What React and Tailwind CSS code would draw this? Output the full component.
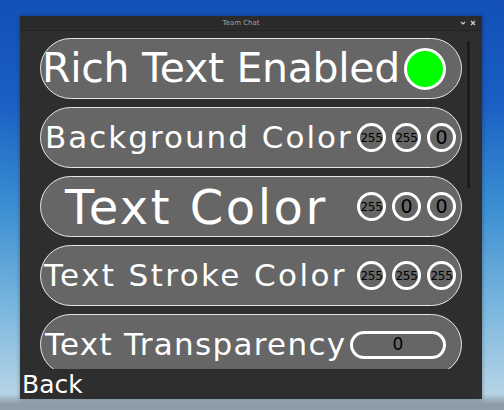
import React from 'react';

const font = { fontFamily: '"DejaVu Sans", "Noto Sans", sans-serif' };

const Dot = ({ value }) => (
  <div className="w-[29px] h-[29px] rounded-full border-[3px] border-white bg-[#666666] flex items-center justify-center text-black leading-none">
    {value === '0' ? (
      <span className="text-[19px]">0</span>
    ) : (
      <span className="text-[12px] tracking-[-0.3px]">{value}</span>
    )}
  </div>
);

const Pill = ({ children, className = '' }) => (
  <div className={`shrink-0 h-[61px] w-[422px] rounded-full border border-[#e6e6e6] bg-[#666666] flex items-center ${className}`}>
    {children}
  </div>
);

const ColorRow = ({ label, values, labelClass }) => (
  <Pill className="pr-[5px]">
    <span className={`flex-1 text-white whitespace-nowrap leading-none ${labelClass}`}>{label}</span>
    <div className="flex gap-[6px]">
      {values.map((v, i) => (
        <Dot key={i} value={v} />
      ))}
    </div>
  </Pill>
);

export default function App() {
  return (
    <div
      className="w-[504px] h-[410px] overflow-hidden pl-[20px] pt-[16px] bg-[linear-gradient(180deg,#1250b6_0%,#1a5fc4_25%,#3a8ed2_50%,#7ab6de_75%,#b6d4e6_96%,#8e9ca8_98.5%,#8e9ca8_100%)]"
      style={font}
    >
      <div className="w-[462px] h-[383px] bg-[#2e2e2e] flex flex-col shadow-[0_0_4px_rgba(0,0,0,0.35)]">
        {/* title bar */}
        <div className="h-[15px] shrink-0 bg-[#2b2b2b] border-b border-[#242424] flex items-center relative">
          <span className="flex-1 text-center pr-[20px] text-[7px] text-[#a0a0a0] leading-none">Team Chat</span>
          <div className="absolute right-[6px] top-[4px] flex items-center gap-[4px]">
            <svg width="6" height="6" viewBox="0 0 6 6">
              <path d="M1 2 L3 4 L5 2" stroke="#d0d0d0" strokeWidth="1.2" fill="none" />
            </svg>
            <svg width="6" height="6" viewBox="0 0 6 6">
              <path d="M1 1 L5 5 M5 1 L1 5" stroke="#d0d0d0" strokeWidth="1.2" fill="none" />
            </svg>
          </div>
        </div>

        {/* scroll area */}
        <div className="h-[338px] shrink-0 overflow-hidden flex pl-[20px]">
          <div className="flex flex-col gap-[8px] pt-[7px]">
            <Pill className="pl-[1px] pr-[15px]">
              <span className="flex-1 text-white text-[41px] tracking-[-0.3px] leading-none whitespace-nowrap">Rich Text Enabled</span>
              <div className="w-[42px] h-[42px] rounded-full border-[3px] border-white bg-[#00ff00]" />
            </Pill>
            <ColorRow label="Background Color" values={['255', '255', '0']} labelClass="pl-[4px] text-[31px] tracking-[2px]" />
            <ColorRow label="Text Color" values={['255', '0', '0']} labelClass="pl-[24px] text-[48px] tracking-[2.5px]" />
            <ColorRow label="Text Stroke Color" values={['255', '255', '255']} labelClass="pl-[3px] text-[31px] tracking-[2.4px]" />
            <Pill className="pl-[4px] pr-[15px]">
              <span className="flex-1 text-white text-[31px] tracking-[1.3px] leading-none whitespace-nowrap">Text Transparency</span>
              <div className="w-[96px] h-[28px] rounded-full border-[3px] border-white bg-[#666666] flex items-center justify-center text-black text-[17px] leading-none">
                0
              </div>
            </Pill>
          </div>
          <div className="ml-[5px] pt-[10px]">
            <div className="w-[3px] h-[147px] bg-[#1c1c1c]" />
          </div>
        </div>

        {/* back */}
        <div className="flex-1 flex items-center pl-[2px]">
          <span className="text-white text-[25px] leading-none">Back</span>
        </div>
      </div>
    </div>
  );
}
